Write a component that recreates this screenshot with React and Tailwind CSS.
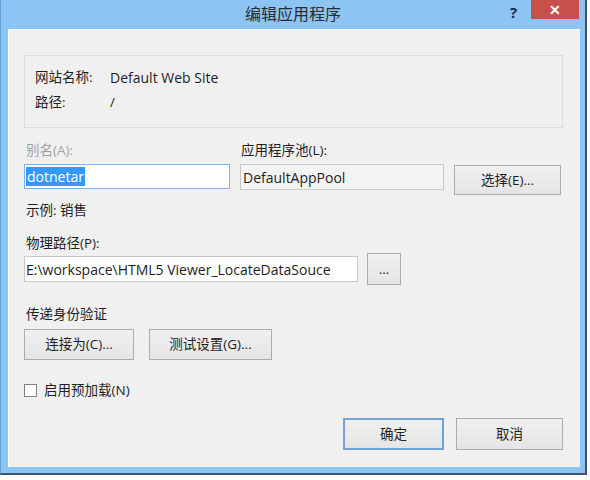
import React from "react";

const font = { fontFamily: '"Open Sans","Noto Sans CJK SC",sans-serif' };

function Btn({ w, h, children, primary }) {
  return (
    <div
      className={`flex items-center justify-center text-[13.5px] text-[#1e1e1e] bg-gradient-to-b from-[#f0f0f0] to-[#e5e5e5] ${
        primary ? "border-2 border-[#6fa3d6]" : "border border-[#acacac]"
      }`}
      style={{ width: w, height: h }}
    >
      {children}
    </div>
  );
}

export default function App() {
  return (
    <div className="w-[590px] h-[480px] bg-white overflow-hidden" style={font}>
      <div className="w-[587px] h-[475px] flex flex-col bg-[#8cc4f4] border-l border-l-[#5f9fdc] border-r-2 border-b-2 border-r-[#3d5470] border-b-[#3d5470]">
        {/* title bar */}
        <div className="h-[29px] flex items-start relative">
          <div className="flex-1 text-center text-[16px] leading-[28px] text-[#2b2b2b]">
            编辑应用程序
          </div>
          <div className="absolute left-[509px] top-[0px] text-[15px] font-bold text-[#1a2a4a] leading-[24px]">
            ?
          </div>
          <div className="absolute left-[530px] top-0 w-[48px] h-[19px] bg-[#c94f4a] flex items-center justify-center text-white text-[14px] font-bold leading-none">
            ✕
          </div>
        </div>
        {/* content */}
        <div className="ml-[7px] mr-[5px] mb-[6px] flex-1 bg-[#f0f0f0] border-l border-t border-white pl-[15px] pr-[17px] flex flex-col text-[13.5px] text-[#1e1e1e]">
          {/* group box */}
          <div className="mt-[25px] h-[73px] border border-[#dcdcdc] pl-[10px] pt-[9px] flex flex-col">
            <div className="flex h-[25px] items-center">
              <span className="w-[75px]">网站名称:</span>
              <span className="text-[14px]">Default Web Site</span>
            </div>
            <div className="flex h-[25px] items-center">
              <span className="w-[75px]">路径:</span>
              <span>/</span>
            </div>
          </div>

          <div className="mt-[14px] flex h-[16px] leading-[16px]">
            <span className="w-[216px] pl-[2px] text-[#a0a0a0]">别名(A):</span>
            <span className="pl-[1px]">应用程序池(L):</span>
          </div>
          <div className="mt-[6px] flex items-start">
            <div className="w-[206px] h-[25px] bg-white border border-[#7eb4ea] flex items-center pl-[1px]">
              <span className="bg-[#3399ff] text-white text-[14px] h-[19px] leading-[19px] px-[1px]">dotnetar</span>
            </div>
            <div className="ml-[10px] w-[204px] h-[26px] bg-[#f3f3f3] border border-[#c9c9c9] flex items-center pl-[2px] text-[14px]">
              DefaultAppPool
            </div>
            <div className="ml-[10px] mt-[1px]">
              <Btn w={107} h={30}>选择(E)...</Btn>
            </div>
          </div>

          <div className="mt-[7px] h-[16px] leading-[16px] pl-[2px]">示例: 销售</div>
          <div className="mt-[17px] h-[16px] leading-[16px] pl-[2px]">物理路径(P):</div>
          <div className="mt-[2px] flex items-center">
            <div className="w-[334px] h-[26px] bg-white border border-[#c9c9c9] flex items-center pl-[1px] text-[14px]">
              E:\workspace\HTML5 Viewer_LocateDataSouce
            </div>
            <div className="ml-[9px]">
              <Btn w={34} h={32}>...</Btn>
            </div>
          </div>

          <div className="mt-[21px] h-[16px] leading-[16px] pl-[2px]">传递身份验证</div>
          <div className="mt-[7px] flex gap-[15px]">
            <Btn w={110} h={31}>连接为(C)...</Btn>
            <Btn w={123} h={31}>测试设置(G)...</Btn>
          </div>

          <div className="mt-[22px] h-[16px] flex items-center">
            <div className="w-[13px] h-[13px] bg-white border border-[#808080]"></div>
            <span className="ml-[7px] leading-[16px]">启用预加载(N)</span>
          </div>

          <div className="mt-[20px] flex justify-end gap-[12px]">
            <Btn w={101} h={32} primary>确定</Btn>
            <Btn w={107} h={32}>取消</Btn>
          </div>
        </div>
      </div>
    </div>
  );
}
